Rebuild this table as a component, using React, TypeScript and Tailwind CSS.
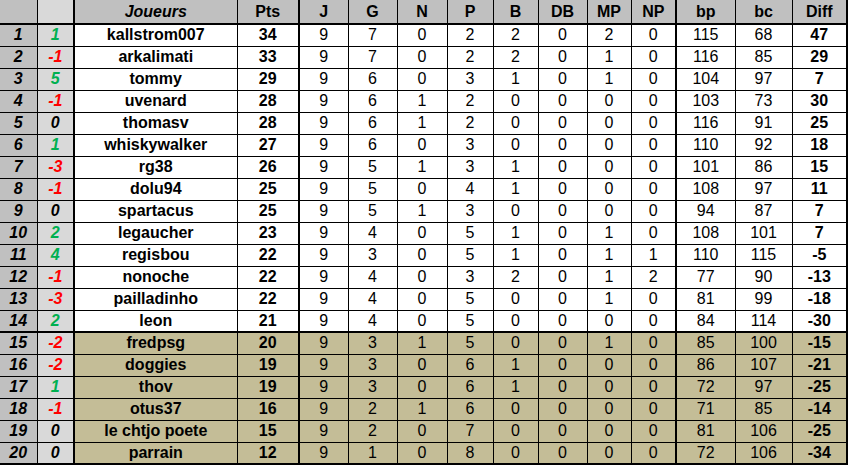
import React from 'react'

type Row = [number, number, string, number, number, number, number, number, number, number, number, number, number, number, number]

const rows: Row[] = [
  [1, 1, 'kallstrom007', 34, 9, 7, 0, 2, 2, 0, 2, 0, 115, 68, 47],
  [2, -1, 'arkalimati', 33, 9, 7, 0, 2, 2, 0, 1, 0, 116, 85, 29],
  [3, 5, 'tommy', 29, 9, 6, 0, 3, 1, 0, 1, 0, 104, 97, 7],
  [4, -1, 'uvenard', 28, 9, 6, 1, 2, 0, 0, 0, 0, 103, 73, 30],
  [5, 0, 'thomasv', 28, 9, 6, 1, 2, 0, 0, 0, 0, 116, 91, 25],
  [6, 1, 'whiskywalker', 27, 9, 6, 0, 3, 0, 0, 0, 0, 110, 92, 18],
  [7, -3, 'rg38', 26, 9, 5, 1, 3, 1, 0, 0, 0, 101, 86, 15],
  [8, -1, 'dolu94', 25, 9, 5, 0, 4, 1, 0, 0, 0, 108, 97, 11],
  [9, 0, 'spartacus', 25, 9, 5, 1, 3, 0, 0, 0, 0, 94, 87, 7],
  [10, 2, 'legaucher', 23, 9, 4, 0, 5, 1, 0, 1, 0, 108, 101, 7],
  [11, 4, 'regisbou', 22, 9, 3, 0, 5, 1, 0, 1, 1, 110, 115, -5],
  [12, -1, 'nonoche', 22, 9, 4, 0, 3, 2, 0, 1, 2, 77, 90, -13],
  [13, -3, 'pailladinho', 22, 9, 4, 0, 5, 0, 0, 1, 0, 81, 99, -18],
  [14, 2, 'leon', 21, 9, 4, 0, 5, 0, 0, 0, 0, 84, 114, -30],
  [15, -2, 'fredpsg', 20, 9, 3, 1, 5, 0, 0, 1, 0, 85, 100, -15],
  [16, -2, 'doggies', 19, 9, 3, 0, 6, 1, 0, 0, 0, 86, 107, -21],
  [17, 1, 'thov', 19, 9, 3, 0, 6, 1, 0, 0, 0, 72, 97, -25],
  [18, -1, 'otus37', 16, 9, 2, 1, 6, 0, 0, 0, 0, 71, 85, -14],
  [19, 0, 'le chtjo poete', 15, 9, 2, 0, 7, 0, 0, 0, 0, 81, 106, -25],
  [20, 0, 'parrain', 12, 9, 1, 0, 8, 0, 0, 0, 0, 72, 106, -34],
]

const widths = [37, 37, 163, 62, 49, 49, 50, 46, 45, 49, 44, 45, 59, 57, 55]
const heads = ['', '', 'Joueurs', 'Pts', 'J', 'G', 'N', 'P', 'B', 'DB', 'MP', 'NP', 'bp', 'bc', 'Diff']

// which columns carry a thick line on their right side
const thickRight = [1, 3, 11, 14]

const App = () => {
  return (
    <div className="w-[849px] h-[467px] bg-white overflow-hidden font-['Liberation_Sans',Arial,sans-serif] text-[16px] leading-none text-black">
      <table className="table-fixed border-collapse w-[847px]">
        <colgroup>
          {widths.map((w, i) => (
            <col key={i} style={{ width: w }} />
          ))}
        </colgroup>
        <thead>
          <tr className="h-[24px]">
            {heads.map((h, i) => (
              <th
                key={i}
                className={`border border-black border-t-0 border-b-2 p-0 font-bold text-center ${
                  i === 0 ? 'border-l-0' : ''
                } ${thickRight.includes(i) ? 'border-r-2' : ''} ${i === 1 ? 'bg-[#d9d9d9]' : 'bg-[#c0c0c0]'} ${
                  i === 2 ? 'italic' : ''
                }`}
              >
                {h}
              </th>
            ))}
          </tr>
        </thead>
        <tbody>
          {rows.map((r) => {
            const rank = r[0]
            const tan = rank >= 15
            const thickBottom = rank === 14 || rank === 20
            return (
              <tr key={rank} className="h-[22px]">
                {r.map((v, i) => {
                  let bg = tan ? 'bg-[#c4bd97]' : 'bg-white'
                  if (i === 0) bg = 'bg-[#c0c0c0]'
                  if (i === 1) bg = 'bg-[#d9d9d9]'
                  let color = 'text-black'
                  if (i === 1 && typeof v === 'number') {
                    if (v > 0) color = 'text-[#00b050]'
                    else if (v < 0) color = 'text-[#ff0000]'
                  }
                  const weight = i <= 3 || i === 14 ? 'font-bold' : 'font-normal'
                  const italic = i <= 1 ? 'italic' : ''
                  return (
                    <td
                      key={i}
                      className={`border border-black p-0 text-center whitespace-nowrap ${bg} ${color} ${weight} ${italic} ${
                        i === 0 ? 'border-l-0' : ''
                      } ${thickRight.includes(i) ? 'border-r-2' : ''} ${thickBottom ? 'border-b-2' : ''}`}
                    >
                      {v}
                    </td>
                  )
                })}
              </tr>
            )
          })}
        </tbody>
      </table>
    </div>
  )
}

export default App
